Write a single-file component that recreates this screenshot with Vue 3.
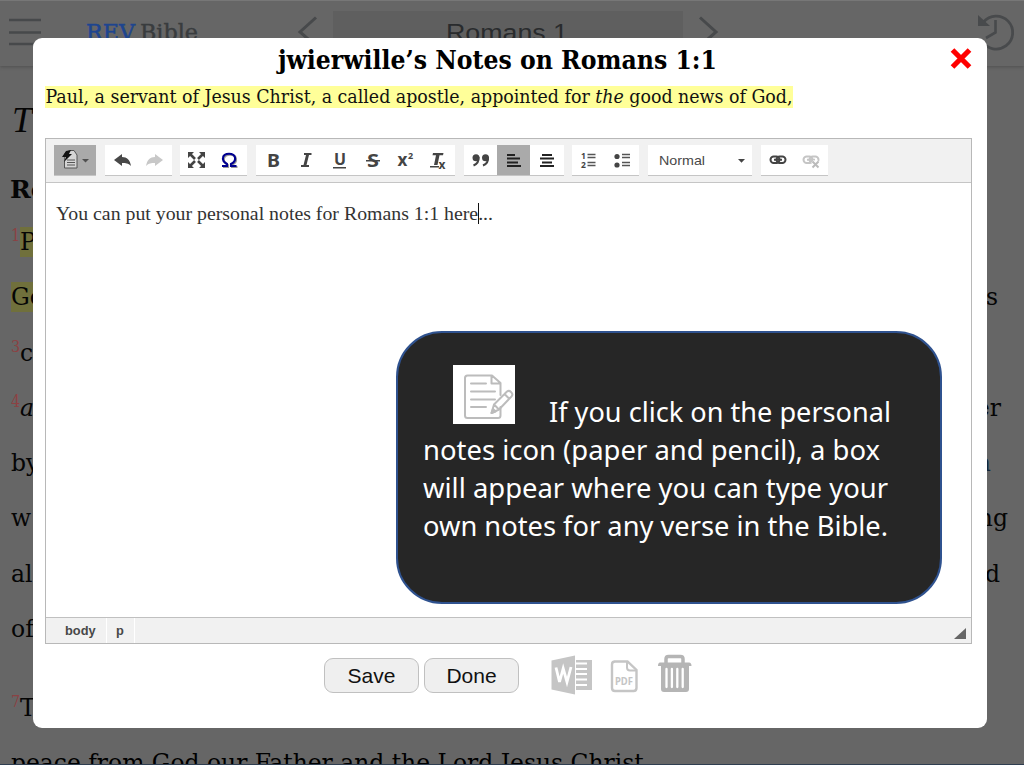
<script setup>
const rows = [
  { n: '1', left: 'P', right: '', mark: true },
  { n: '', left: 'Go', right: 's', mark: true },
  { n: '3', left: 'c', right: '' },
  { n: '4', left: 'a', right: 'er', italic: true, end: 1001 },
  { n: '', left: 'by', right: 'n', link: true, end: 991 },
  { n: '', left: 'w', right: 'ng', end: 1008 },
  { n: '', left: 'al', right: 'd', end: 1000 },
  { n: '', left: 'of', right: '' },
  { n: '7', left: 'T', right: '', gap: true }
]
</script>

<template>
  <div class="screen">
    <div class="page">
      <header class="top">
        <svg width="1024" height="66" viewBox="0 0 1024 66">
          <g stroke="#47494b" stroke-width="2.6" fill="none">
            <path d="M9 20H41M9 32.500H41M9 44H41" stroke-width="2.400" />
            <path d="M316 17.500L300 32L316 46" stroke-width="3" />
            <path d="M700 17.500L716 32L700 46" stroke-width="3" />
          </g>
          <text x="86" y="40" class="serif" font-size="22.500" fill="#1e458f" stroke="#1e458f" stroke-width="0.5" textLength="49" lengthAdjust="spacingAndGlyphs">REV</text>
          <text x="140" y="40" class="serif" font-size="22.500" fill="#393c3e" stroke="#393c3e" stroke-width="0.4" textLength="58" lengthAdjust="spacingAndGlyphs">Bible</text>
          <rect x="333" y="11" width="350" height="42" fill="#5f5f5f" />
          <text x="446" y="40.500" class="sans" font-size="24.500" fill="#292b2d" textLength="122" lengthAdjust="spacingAndGlyphs">Romans 1</text>
          <g stroke="#484a4c" stroke-width="2.800" fill="none">
            <path d="M983.500 22A16.500 16.500 0 1 1 982 41" />
            <path d="M995.500 20V32.500L986 38" stroke-width="2.600" />
          </g>
          <path d="M978 15V26H990Z" fill="#484a4c" />
        </svg>
      </header>
      <main class="chapter">
        <div class="book">T</div>
        <div class="heading">Re</div>
        <div v-for="(r, i) in rows" :key="i" class="row" :class="{ gap: r.gap }">
          <span class="lead"><sup v-if="r.n">{{ r.n }}</sup><span :class="{ mark: r.mark, em: r.italic }">{{ r.left }}</span></span>
          <span class="tail" :class="{ link: r.link }" :style="{ marginRight: 1024 - (r.end || 998) + 'px' }">{{ r.right }}</span>
        </div>
        <svg class="last" width="1024" height="34" viewBox="0 0 1024 34">
          <text x="11" y="33" class="serif" font-size="24" textLength="640" lengthAdjust="spacingAndGlyphs">peace from God our Father and the Lord Jesus Christ.</text>
        </svg>
      </main>
    </div>

    <section class="dialog">
      <svg class="intro" width="954" height="100" viewBox="33 38 954 100">
        <text x="278" y="69" class="serif" font-size="26" font-weight="bold" textLength="439" lengthAdjust="spacingAndGlyphs">jwierwille’s Notes on Romans 1:1</text>
        <path d="M952.500 50L969.500 67M969.500 50L952.500 67" stroke="#f00" stroke-width="5.200" />
        <rect x="45" y="86" width="748" height="22" fill="#ffff99" />
        <text x="45.500" y="103" class="serif" font-size="19" fill="#111" textLength="747" lengthAdjust="spacingAndGlyphs">Paul, a servant of Jesus Christ, a called apostle, appointed for <tspan font-style="italic">the</tspan> good news of God,</text>
      </svg>

      <div class="editor">
        <div class="toolbar">
          <div class="group source">
            <svg width="42" height="30" viewBox="54 145 42 30">
              <path d="M65 153L70 150.500H74L77 155V168H64.500V161Z" fill="#d5d5d5" stroke="#555" />
              <path d="M66 151L71 150L69 154H72L64 162L66 157H62Z" fill="#111" />
              <path d="M67 160H75M67 162.500H75M67 165H75" stroke="#555" />
              <path d="M82 159H89L85.500 162.500Z" fill="#505050" />
            </svg>
          </div>
          <div class="group">
            <svg width="67" height="30" viewBox="105 145 67 30">
              <path d="M114 160L122 154V157C127 157 130 160 131 166C128 163 126 163 122 163V166Z" fill="#484848" />
              <path d="M163 160L155 154V157C150 157 147 160 146 166C149 163 151 163 155 163V166Z" fill="#c8c8c8" />
            </svg>
          </div>
          <div class="group">
            <svg width="67" height="30" viewBox="181 145 67 30">
              <g stroke="#444" stroke-width="2.600"><path d="M191 154L196 159M204 154L199 159M191 166L196 161M204 166L199 161" /></g>
              <path d="M189 152H195L189 158ZM206 152H200L206 158ZM189 168H195L189 162ZM206 168H200L206 162Z" fill="#444" />
              <path d="M223 166H228V164C224.500 162 223.500 159.500 224 157.500C225 152.500 235 152.500 236 157.500C236.500 160 235 162.500 232 164V166H237.500" fill="none" stroke="#999" stroke-width="2" transform="translate(1 1)" />
              <path d="M223 166H228V164C224.500 162 223.500 159.500 224 157.500C225 152.500 235 152.500 236 157.500C236.500 160 235 162.500 232 164V166H237.500" fill="none" stroke="#000090" stroke-width="2.100" />
            </svg>
          </div>
          <div class="group">
            <svg width="199" height="30" viewBox="256 145 199 30" fill="#444">
              <text x="267" y="166.500" class="bold" font-size="17.500" textLength="13" lengthAdjust="spacingAndGlyphs">B</text>
              <path d="M304 153H311.500V155H309L306.500 165H309V167H301V165H303.500L306 155H304Z" />
              <text x="334" y="165" class="bold" font-size="15.500" textLength="12" lengthAdjust="spacingAndGlyphs">U</text>
              <path d="M333 167H346V168.500H333ZM366 160H380V161.500H366Z" />
              <text x="367" y="166.500" class="bold" font-size="17" textLength="12" lengthAdjust="spacingAndGlyphs">S</text>
              <text x="397.500" y="166" class="bold" font-size="17">x</text>
              <text x="408" y="159" class="bold" font-size="9">2</text>
              <path d="M433 153H443.500L443 155.200H439.500L437.500 165H434L436 155.200H432.500ZM430 166H439V167.500H430Z" />
              <text x="438.500" y="169" class="bold" font-size="12">x</text>
            </svg>
          </div>
          <div class="group">
            <svg width="100" height="30" viewBox="464 145 100 30">
              <rect x="497" y="145" width="33" height="30" fill="#aaa" />
              <g fill="#444"><circle cx="476" cy="157.800" r="3.500" /><circle cx="485.500" cy="157.800" r="3.500" /></g>
              <g fill="none" stroke="#444" stroke-width="2"><path d="M478.500 157C479 161 477 164 473.500 165.500M488 157C488.500 161 486.500 164 483 165.500" /></g>
              <g stroke="#222" stroke-width="2"><path d="M507 155H515M507 158.500H520M507 162.500H518M507 166H521M542 155H552M540 158.500H554M542 162.500H552M540 166H554" /></g>
            </svg>
          </div>
          <div class="group">
            <svg width="67" height="30" viewBox="573 145 67 30" fill="#444">
              <text x="582" y="159" class="bold" font-size="8.500">1</text>
              <text x="582" y="168" class="bold" font-size="8.500">2</text>
              <circle cx="618" cy="156.500" r="2.600" /><circle cx="618" cy="165" r="2.600" />
              <path d="M588.500 154.500H596.500M588.500 157.500H596.500M588.500 162.500H596.500M588.500 165.500H596.500M623 154.500H631M623 157.500H631M623 162.500H631M623 165.500H631" stroke="#555" stroke-width="1.500" />
            </svg>
          </div>
          <div class="group">
            <svg width="104" height="30" viewBox="648 145 104 30">
              <text x="659" y="164.500" class="sans" font-size="13.500" fill="#484848" textLength="46" lengthAdjust="spacingAndGlyphs">Normal</text>
              <path d="M738 159H745L741.500 162.700Z" fill="#444" />
            </svg>
          </div>
          <div class="group">
            <svg width="67" height="30" viewBox="760 145 67 30" fill="none">
              <g stroke="#444" stroke-width="2"><rect x="769.500" y="156.500" width="9" height="6.500" rx="3.200" /><rect x="775.500" y="156.500" width="9" height="6.500" rx="3.200" /><path d="M773 159.700H781" /></g>
              <g stroke="#c5c5c5" stroke-width="2"><rect x="802.500" y="156.500" width="9" height="6.500" rx="3.200" /><rect x="808.500" y="156.500" width="9" height="6.500" rx="3.200" /><path d="M806 159.700H814" /></g>
              <path d="M811.500 161.500L817.500 167.500M817.500 161.500L811.500 167.500" stroke="#fff" stroke-width="4" />
              <path d="M811.500 161.500L817.500 167.500M817.500 161.500L811.500 167.500" stroke="#bbb" stroke-width="2" />
            </svg>
          </div>
        </div>
        <div class="content">
          <svg width="460" height="36" viewBox="46 196 460 36">
            <text x="56" y="220" class="times" font-size="19.500" fill="#333" textLength="437" lengthAdjust="spacingAndGlyphs">You can put your personal notes for Romans 1:1 here...</text>
            <path d="M478.500 203V224" stroke="#111" stroke-width="1" />
          </svg>
        </div>
        <div class="status">
          <span class="crumb">body</span><span class="crumb short">p</span>
          <svg class="grip" width="12" height="12" viewBox="0 0 12 12"><path d="M12 0V11H0Z" fill="#666" /></svg>
        </div>
      </div>

      <div class="actions">
        <button>Save</button>
        <button>Done</button>
        <svg class="tools" width="150" height="44" viewBox="545 652 150 44">
          <path d="M551.500 660.500L575 655.500V694.500L551.500 689.500Z" fill="#c5c5c5" />
          <path d="M576 660H592V690H576V686H587V684H576V680.500H587V678.500H576V675H587V673H576V670H587V668H576V664.500H587V662.500H576Z" fill="#c5c5c5" />
          <path d="M556 667.500L559.500 682L563.200 668.500L567 682L571 667" fill="none" stroke="#fff" stroke-width="2.800" />
          <path d="M614 661.500H627.500L636.500 670V688Q636.500 691 633.500 691H615Q612 691 612 688V664.500Q612 661.500 615 661.500Z" fill="none" stroke="#c5c5c5" stroke-width="2.400" />
          <path d="M627 662V667.500Q627 670.500 630 670.500H636" fill="none" stroke="#c5c5c5" stroke-width="2" />
          <text x="615" y="684.500" class="bold" font-size="10.500" fill="#c5c5c5" textLength="18" lengthAdjust="spacingAndGlyphs">PDF</text>
          <path d="M666 663V659Q666 656.500 668.500 656.500H680.500Q683 656.500 683 659V663" fill="none" stroke="#b5b5b5" stroke-width="3.500" />
          <path d="M660 662.500H689Q691.500 662.500 691.500 666H689V689Q689 692 686 692H664Q661 692 661 689V666H658Q658 662.500 660 662.500Z" fill="#b5b5b5" />
          <path d="M666.500 669V687M671.900 669V687M677.300 669V687M682.700 669V687" stroke="#fff" stroke-width="2.300" stroke-linecap="round" />
        </svg>
      </div>
    </section>

    <aside class="callout">
      <svg width="542" height="269" viewBox="398 333 542 269">
        <rect x="453" y="365" width="62" height="59" fill="#fff" />
        <g fill="none" stroke="#bcbcbc" stroke-width="2" stroke-linejoin="round" stroke-linecap="round">
          <path d="M500.500 395V383L492 375.500H467.500Q465 375.500 465 378V415.500Q465 418 467.500 418H498Q500.500 418 500.500 415.500V407M491.500 376V383.500H500M471 383.500H486M471 391.500H495M471 399.500H495M471 407H486" />
          <path d="M491.500 413L494 404.500L507 391.500Q509 390 511 392Q513.500 394.500 511.500 396.500L499 409.500ZM494 404.500L499 409.500M504.500 394L509 398.500" />
          <path d="M491.500 413L493 409L495.500 411.500Z" fill="#bcbcbc" />
        </g>
        <g class="tip" font-size="28" fill="#fff">
          <text x="549" y="421.500" textLength="342" lengthAdjust="spacingAndGlyphs">If you click on the personal</text>
          <text x="423" y="459.500" textLength="457" lengthAdjust="spacingAndGlyphs">notes icon (paper and pencil), a box</text>
          <text x="423" y="497.500" textLength="465" lengthAdjust="spacingAndGlyphs">will appear where you can type your</text>
          <text x="423" y="535.500" textLength="465" lengthAdjust="spacingAndGlyphs">own notes for any verse in the Bible.</text>
        </g>
      </svg>
    </aside>
  </div>
</template>

<style>
body { margin: 0; overflow: hidden; background: #666; }
</style>

<style scoped>
.screen { position: relative; width: 1024px; height: 765px; overflow: hidden; background: #666; }
svg { display: block; flex: none; }
.serif { font-family: "DejaVu Serif Condensed", "DejaVu Serif", serif; }
.sans { font-family: "Liberation Sans", sans-serif; }
.bold { font-family: "Noto Sans", sans-serif; font-weight: 700; }
.times { font-family: "Liberation Serif", serif; }
.tip { font-family: "Noto Sans", sans-serif; }
.page { height: 764px; overflow: hidden; border-bottom: 1px solid #2f3e50; }
.top { box-sizing: border-box; height: 66px; border-top: 1px solid #777; background: #666; box-shadow: 0 1px 3px #505050; }
.top svg { margin-top: -1px; }
.chapter { font-family: "DejaVu Serif", serif; font-size: 23.500px; color: #050505; }
.book { height: 95px; padding-left: 12px; font-size: 36px; line-height: 108px; font-style: italic; font-family: "Liberation Serif", serif; }
.heading { height: 54px; padding-left: 10px; font-size: 25px; line-height: 57px; font-weight: 700; }
.row { display: flex; justify-content: space-between; height: 55.300px; line-height: 55px; padding-left: 11px; }
.row.gap { margin-top: 24px; }
.lead { white-space: nowrap; }
.lead sup { display: inline-block; width: 9px; font: 16px/0 "DejaVu Serif Condensed", serif; color: #8c4143; vertical-align: 9px; }
.mark { padding: 1px 0; background: #70703c; }
.em { font-style: italic; }
.link { color: #13263a; }
.last { margin-top: 1px; }
.dialog { position: absolute; left: 33px; top: 38px; width: 954px; height: 690px; border-radius: 9px; background: #fff; overflow: hidden; }
.editor { box-sizing: border-box; width: 927px; height: 506px; margin-left: 12px; border: 1px solid #b8b8b8; display: flex; flex-direction: column; }
.toolbar { box-sizing: border-box; height: 44px; padding: 6px 8px; display: flex; gap: 8.700px; background: #f1f1f1; border-bottom: 1px solid #c5c5c5; }
.group { height: 30px; background: #fff; border-bottom: 1px solid #c5c5c5; }
.group.source { background: #aaa; }
.content { flex: 1; padding-top: 13px; }
.status { height: 25px; display: flex; align-items: stretch; background: #f1f1f1; border-top: 1px solid #c0c0c0; font: 700 12.800px/25px "Liberation Sans", sans-serif; color: #484848; }
.crumb { box-sizing: border-box; width: 61px; padding-left: 19px; border-right: 1px solid #fff; }
.crumb.short { width: 28px; padding-left: 9px; }
.grip { margin: 10px 5px 0 auto; }
.actions { display: flex; padding: 8px 0 0 291px; gap: 5px; }
button { box-sizing: border-box; width: 95px; height: 35px; margin-top: 6px; padding: 0; border: 1px solid #c0c0c0; border-radius: 9px; background: #efefef; color: #111; font: 21px "Liberation Sans", sans-serif; }
.tools { margin-left: 21px; }
.callout { box-sizing: border-box; position: absolute; left: 396px; top: 331px; width: 546px; height: 273px; border: 2px solid #2f528f; border-radius: 46px; background: #262626; }
</style>
